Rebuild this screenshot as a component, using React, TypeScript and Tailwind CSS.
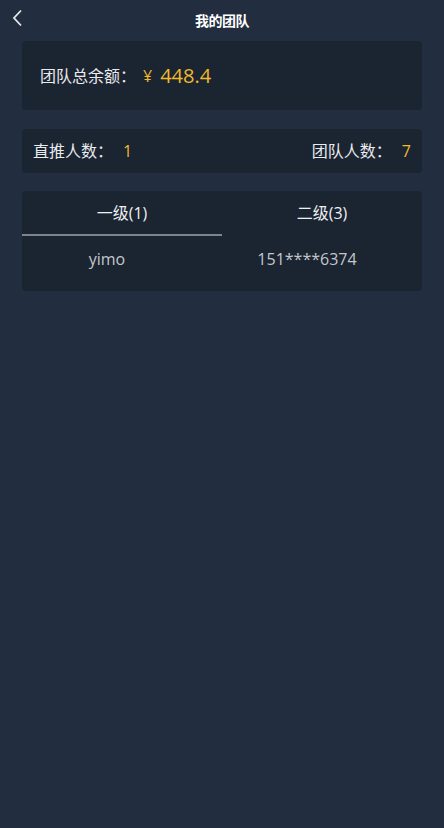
import { useState } from "react";

const cardStyle = "mx-[22px] rounded-[4px] bg-[#1b2431]";

const levels = [
  { label: "一级(1)", members: ["yimo"] },
  { label: "二级(3)", members: ["151****6374"] },
];

export default function App() {
  const [active, setActive] = useState(0);

  return (
    <div
      className="min-h-[828px] w-full bg-[#222d3f] text-white"
      style={{ fontFamily: '"Open Sans", "Noto Sans CJK SC", sans-serif' }}
    >
      {/* header */}
      <div className="relative flex h-[41px] items-center justify-center">
        <button className="absolute left-[10px] top-[9px] text-[#e6e8eb]">
          <svg width="16" height="18" viewBox="0 0 16 18" fill="none">
            <path d="M11 1.5 L4 9 L11 16.5" stroke="currentColor" strokeWidth="1.8" />
          </svg>
        </button>
        <h1 className="text-[14px] font-bold tracking-[-0.5px]">我的团队</h1>
      </div>

      {/* balance */}
      <div className={`${cardStyle} flex h-[69px] items-center pl-[18px]`}>
        <span className="text-[16px] text-[#e9ebee]">团队总余额：</span>
        <span className="ml-[7px] text-[16px] text-[#f1b92b]">¥</span>
        <span className="ml-[8px] text-[20px] font-medium text-[#f1b92b]">448.4</span>
      </div>

      {/* counts */}
      <div className={`${cardStyle} mt-[19px] flex h-[44px] items-center justify-between px-[11px]`}>
        <div className="flex items-center text-[16px]">
          <span className="text-[#e9ebee]">直推人数：</span>
          <span className="ml-[10px] text-[#f1b92b]">1</span>
        </div>
        <div className="flex items-center text-[16px]">
          <span className="text-[#e9ebee]">团队人数：</span>
          <span className="ml-[10px] text-[#f1b92b]">7</span>
        </div>
      </div>

      {/* levels */}
      <div className={`${cardStyle} mt-[18px] h-[100px]`}>
        <div className="grid grid-cols-2">
          {levels.map((lv, i) => (
            <button
              key={lv.label}
              onClick={() => setActive(i)}
              className={`flex h-[45px] items-center justify-center border-b-2 text-[16px] text-[#eef0f2] ${
                active === i ? "border-[#7e838c]" : "border-transparent"
              }`}
            >
              {lv.label}
            </button>
          ))}
        </div>
        <div className="grid grid-cols-2">
          {levels.map((lv) => (
            <div key={lv.label} className="flex h-[45px] items-center justify-center pr-[30px] text-[16px] text-[#c3c7cd]">
              {lv.members[0]}
            </div>
          ))}
        </div>
      </div>
    </div>
  );
}
